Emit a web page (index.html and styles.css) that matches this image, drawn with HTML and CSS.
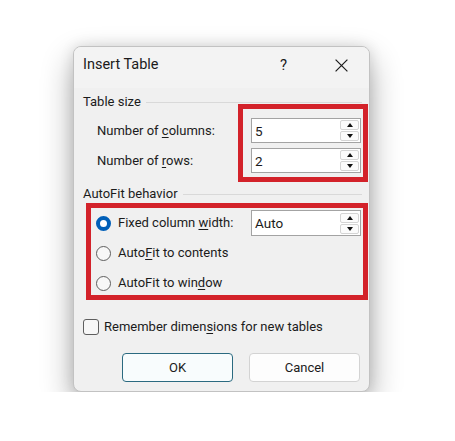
FILE: index.html
```html
<!DOCTYPE html>
<html>
<head>
<meta charset="utf-8">
<title>Insert Table</title>
<link rel="stylesheet" href="styles.css">
</head>
<body>
<div class="dialog">
  <div class="titlebar">
    <span class="title">Insert Table</span>
    <span class="help">?</span>
    <span class="close">
      <svg width="13" height="13" viewBox="0 0 13 13"><path d="M0.6 0.6 L12.4 12.4 M12.4 0.6 L0.6 12.4" stroke="#1b1b1b" stroke-width="1.2" fill="none"/></svg>
    </span>
  </div>
  <div class="content">
    <div class="group-head"><span>Table size</span></div>
    <div class="field-rows">
      <div class="field-row">
        <span class="label">Number of <u>c</u>olumns:</span>
        <div class="spin-input"><span class="value">5</span><span class="spin"><span class="sbtn"><i class="up"></i></span><span class="sbtn"><i class="down"></i></span></span></div>
      </div>
      <div class="field-row">
        <span class="label">Number of <u>r</u>ows:</span>
        <div class="spin-input"><span class="value">2</span><span class="spin"><span class="sbtn"><i class="up"></i></span><span class="sbtn"><i class="down"></i></span></span></div>
      </div>
    </div>
    <div class="group-head second"><span>AutoFit behavior</span></div>
    <div class="radio-rows">
      <div class="radio-row">
        <span class="radio checked"></span>
        <span class="rlabel">Fixed column <u>w</u>idth:</span>
        <div class="spin-input"><span class="value">Auto</span><span class="spin"><span class="sbtn"><i class="up"></i></span><span class="sbtn"><i class="down"></i></span></span></div>
      </div>
      <div class="radio-row">
        <span class="radio"></span>
        <span class="rlabel">Auto<u>F</u>it to contents</span>
      </div>
      <div class="radio-row">
        <span class="radio"></span>
        <span class="rlabel">AutoFit to win<u>d</u>ow</span>
      </div>
    </div>
    <div class="check-row">
      <span class="checkbox"></span>
      <span>Remember dimen<u>s</u>ions for new tables</span>
    </div>
    <div class="buttons">
      <span class="btn default">OK</span>
      <span class="btn">Cancel</span>
    </div>
  </div>
  <div class="mark mark-size"></div>
  <div class="mark mark-fit"></div>
</div>
</body>
</html>
```
FILE: styles.css
```css
html, body {
  margin: 0;
  padding: 0;
  background: #ffffff;
}
body {
  font-family: Roboto, "Noto Sans", sans-serif;
  font-size: 13px;
  line-height: 16px;
  color: #1b1b1b;
}
u {
  text-decoration-thickness: 1px;
  text-underline-offset: 2px;
}
.dialog {
  position: relative;
  box-sizing: border-box;
  width: 297px;
  height: 346px;
  margin: 46px 0 0 73px;
  background: #f0f0f0;
  border: 1px solid #c2c2c2;
  border-radius: 8px;
  box-shadow: 0 14px 32px rgba(0, 0, 0, 0.32), 0 0 14px rgba(0, 0, 0, 0.12);
}
.titlebar {
  display: flex;
  align-items: flex-start;
  height: 41px;
  box-sizing: border-box;
  padding: 8px 0 0 9px;
  background: #f3f3f3;
  border-radius: 7px 7px 0 0;
}
.title {
  flex: 1;
  font-size: 14.5px;
  line-height: 20px;
}
.help {
  width: 45px;
  text-align: center;
  font-size: 15px;
  line-height: 20px;
}
.close {
  width: 45px;
  height: 20px;
  margin: 0 5px 0 13px;
  display: flex;
  align-items: center;
  justify-content: center;
}
.close svg { display: block; }
.content {
  padding: 0 7px 0 9px;
}
.group-head {
  display: flex;
  align-items: center;
  gap: 5px;
  margin-top: 6px;
}
.group-head::after {
  content: "";
  flex: 1;
  height: 1px;
  background: #d9d9d9;
}
.group-head.second {
  margin-top: 13px;
}
.field-rows {
  display: flex;
  flex-direction: column;
  gap: 5px;
  margin-top: 8px;
}
.field-row {
  display: grid;
  grid-template-columns: 154px 110px;
  align-items: center;
  padding-left: 14px;
  height: 25px;
}
.spin-input {
  box-sizing: border-box;
  height: 25px;
  width: 110px;
  display: flex;
  align-items: stretch;
  background: #ffffff;
  border: 1px solid #a3a3a3;
}
.radio-row .spin-input {
  height: 26px;
  margin-left: auto;
  margin-right: 1px;
}
.value {
  flex: 1;
  padding-left: 3px;
  display: flex;
  align-items: center;
  font-size: 13.5px;
}
.spin {
  display: flex;
  flex-direction: column;
  justify-content: center;
  gap: 1px;
  padding: 0 1px 0 0;
}
.sbtn {
  box-sizing: border-box;
  width: 19px;
  height: 10px;
  background: #fbfbfb;
  border: 1px solid #d4d4d4;
  border-radius: 2px;
  display: flex;
  align-items: center;
  justify-content: center;
}
.sbtn i {
  width: 0;
  height: 0;
  border-left: 3.5px solid transparent;
  border-right: 3.5px solid transparent;
}
.sbtn i.up { border-bottom: 4px solid #111111; }
.sbtn i.down { border-top: 4px solid #111111; }
.radio-rows {
  display: flex;
  flex-direction: column;
  gap: 4px;
  margin-top: 8px;
  padding-left: 13px;
}
.radio-row {
  display: flex;
  align-items: center;
  height: 26px;
}
.radio {
  box-sizing: border-box;
  width: 15px;
  height: 15px;
  border-radius: 50%;
  border: 1px solid #5e5e5e;
  background: #f7f7f7;
  margin-right: 7px;
  flex: none;
}
.radio.checked {
  border: 4.5px solid #005fb8;
  background: #ffffff;
}
.check-row {
  display: flex;
  align-items: center;
  gap: 5px;
  margin-top: 23px;
  height: 16px;
}
.checkbox {
  box-sizing: border-box;
  width: 16px;
  height: 16px;
  border: 1px solid #5e5e5e;
  border-radius: 3px;
  background: #f7f7f7;
  flex: none;
}
.buttons {
  display: flex;
  justify-content: flex-end;
  gap: 16px;
  margin-top: 18px;
  padding-right: 2px;
}
.btn {
  box-sizing: border-box;
  width: 111px;
  height: 29px;
  display: flex;
  align-items: center;
  justify-content: center;
  background: #fdfdfd;
  border: 1px solid #d3d3d3;
  border-radius: 4px;
}
.btn.default {
  border-color: #2b6a80;
  background: #f8fcfd;
}
.mark {
  position: absolute;
  box-sizing: border-box;
  border: 5px solid #d3222a;
}
.mark-size {
  left: 164px;
  top: 57px;
  width: 130px;
  height: 78px;
}
.mark-fit {
  left: 12px;
  top: 156px;
  width: 282px;
  height: 97px;
}
```
